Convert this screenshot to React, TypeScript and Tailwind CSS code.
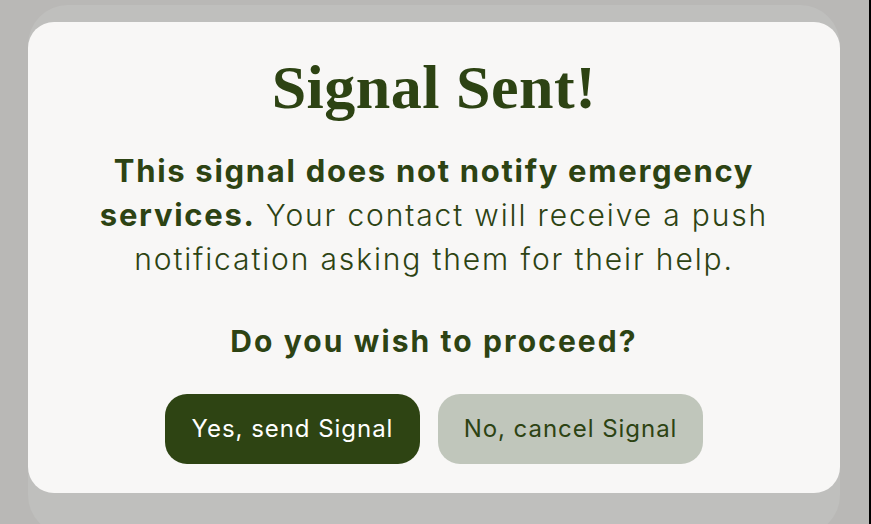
import React from 'react';

export default function App() {
  return (
    <div className="flex h-[524px] w-[871px] overflow-hidden bg-[#b9b8b6]">
      <div className="flex-1 pl-[28px] pt-[5px]">
        {/* card stacked behind the dialog */}
        <div className="h-[530px] w-[812px] rounded-[40px] bg-[#bfbfbd] pt-[17px]">
          <SignalDialog />
        </div>
      </div>
      <div className="w-[2px] bg-black" />
    </div>
  );
}

function SignalDialog() {
  return (
    <div className="flex h-[471px] w-[812px] flex-col items-center rounded-[26px] bg-[#f8f7f6] pt-[34px] text-[#2d4313] font-['Inter',sans-serif]">
      <h1 className="text-[62px] font-bold leading-[62px] tracking-[0.5px] font-['Liberation_Serif',serif]">
        Signal Sent!
      </h1>

      <p className="mt-[31px] w-[740px] text-center text-[30px] font-light leading-[44px] tracking-[0.062em]">
        <span className="text-[31px] font-bold tracking-[0.055em]">This signal does not notify emergency services.</span>{' '}
        Your contact will receive a push notification asking them for their help.
      </p>

      <p className="mt-[43px] text-[30px] font-bold leading-[35px] tracking-[0.07em]">Do you wish to proceed?</p>

      <div className="mt-[35px] flex gap-[18px]">
        <button className="h-[70px] w-[255px] rounded-[22px] bg-[#2e4413] text-[24px] tracking-[0.04em] text-white">
          Yes, send Signal
        </button>
        <button className="h-[70px] w-[265px] rounded-[22px] bg-[#c0c6bb] text-[24px] tracking-[0.04em] text-[#2d4313]">
          No, cancel Signal
        </button>
      </div>
    </div>
  );
}
